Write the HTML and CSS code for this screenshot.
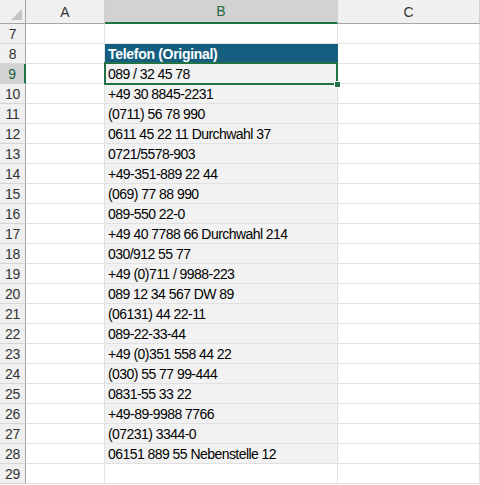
FILE: index.html
```html
<!DOCTYPE html>
<html lang="de">
<head>
    <meta charset="UTF-8">
    <title>Telefon</title>
    <link rel="stylesheet" href="styles.css">
</head>
<body>

    <div class="sheet">
        <!-- Kopfzeile -->
        <div class="hd corner"><span class="tri"></span></div>
        <div class="hd col">A</div>
        <div class="hd col sel-col">B</div>
        <div class="hd col">C</div>

        <div class="hd row">7</div><div class="c"></div><div class="c"></div><div class="c"></div>
        <div class="hd row">8</div><div class="c"></div><div class="c title">Telefon (Original)</div><div class="c"></div>
        <div class="hd row sel-row">9</div><div class="c"></div><div class="c fill active">089 / 32 45 78</div><div class="c"></div>
        <div class="hd row">10</div><div class="c"></div><div class="c fill">+49 30 8845-2231</div><div class="c"></div>
        <div class="hd row">11</div><div class="c"></div><div class="c fill">(0711) 56 78 990</div><div class="c"></div>
        <div class="hd row">12</div><div class="c"></div><div class="c fill">0611 45 22 11 Durchwahl 37</div><div class="c"></div>
        <div class="hd row">13</div><div class="c"></div><div class="c fill">0721/5578-903</div><div class="c"></div>
        <div class="hd row">14</div><div class="c"></div><div class="c fill">+49-351-889 22 44</div><div class="c"></div>
        <div class="hd row">15</div><div class="c"></div><div class="c fill">(069) 77 88 990</div><div class="c"></div>
        <div class="hd row">16</div><div class="c"></div><div class="c fill">089-550 22-0</div><div class="c"></div>
        <div class="hd row">17</div><div class="c"></div><div class="c fill">+49 40 7788 66 Durchwahl 214</div><div class="c"></div>
        <div class="hd row">18</div><div class="c"></div><div class="c fill">030/912 55 77</div><div class="c"></div>
        <div class="hd row">19</div><div class="c"></div><div class="c fill">+49 (0)711 / 9988-223</div><div class="c"></div>
        <div class="hd row">20</div><div class="c"></div><div class="c fill">089 12 34 567 DW 89</div><div class="c"></div>
        <div class="hd row">21</div><div class="c"></div><div class="c fill">(06131) 44 22-11</div><div class="c"></div>
        <div class="hd row">22</div><div class="c"></div><div class="c fill">089-22-33-44</div><div class="c"></div>
        <div class="hd row">23</div><div class="c"></div><div class="c fill">+49 (0)351 558 44 22</div><div class="c"></div>
        <div class="hd row">24</div><div class="c"></div><div class="c fill">(030) 55 77 99-444</div><div class="c"></div>
        <div class="hd row">25</div><div class="c"></div><div class="c fill">0831-55 33 22</div><div class="c"></div>
        <div class="hd row">26</div><div class="c"></div><div class="c fill">+49-89-9988 7766</div><div class="c"></div>
        <div class="hd row">27</div><div class="c"></div><div class="c fill">(07231) 3344-0</div><div class="c"></div>
        <div class="hd row">28</div><div class="c"></div><div class="c fill">06151 889 55 Nebenstelle 12</div><div class="c"></div>
        <div class="hd row">29</div><div class="c"></div><div class="c"></div><div class="c"></div>
    </div>

</body>
</html>
```

FILE: styles.css
```css
body {
    margin: 0;
    background-color: white;
    font-family: "Liberation Sans", Arial, sans-serif;
    font-size: 14px;
    color: #000;
    overflow: hidden;
}

.sheet {
    display: grid;
    grid-template-columns: 26px 79px 233px 142px;
    grid-template-rows: 24px repeat(23, 20px);
}

.sheet > div {
    box-sizing: border-box;
    border-right: 1px solid #e1e1e1;
    border-bottom: 1px solid #e1e1e1;
}

/* Zeilen- und Spaltenköpfe */
.hd {
    background-color: #f0f0f0;
    color: #333;
    display: flex;
    align-items: center;
    justify-content: center;
}

.sheet > .col {
    border-bottom: 1px solid #a6a6a6;
    border-right: 1px solid #d0d0d0;
}

.sheet > .row {
    border-right: 1px solid #a6a6a6;
    border-bottom: 1px solid #d6d6d6;
    letter-spacing: -0.3px;
}

.sheet > .corner {
    position: relative;
    border-right: 1px solid #a6a6a6;
    border-bottom: 1px solid #a6a6a6;
}

.tri {
    position: absolute;
    right: 3px;
    bottom: 3px;
    width: 11px;
    height: 11px;
    background-color: #c4c4c4;
    clip-path: polygon(100% 0, 100% 100%, 0 100%);
}

.sheet > .sel-col {
    background-color: #d2d2d2;
    color: #1f6b42;
    border-bottom: 2px solid #217346;
}

.sheet > .sel-row {
    background-color: #d2d2d2;
    color: #1f5f3c;
    border-right: 2px solid #217346;
}

/* Zellen */
.c {
    padding-left: 3px;
    display: flex;
    align-items: center;
    white-space: nowrap;
    letter-spacing: -0.55px;
}

.sheet > .title {
    background-color: #165e7f;
    color: white;
    font-weight: bold;
    letter-spacing: -0.3px;
    border-right-color: #165e7f;
}

.fill {
    background-color: #f2f2f2;
}

/* aktive Zelle */
.active {
    position: relative;
}

.active::after {
    content: "";
    position: absolute;
    left: -1px;
    top: -2px;
    right: -1px;
    bottom: -2px;
    border: 2px solid #217346;
}

.active::before {
    content: "";
    position: absolute;
    right: -4px;
    bottom: -5px;
    width: 5px;
    height: 5px;
    background-color: #217346;
    border: 1px solid white;
    z-index: 1;
}
```
